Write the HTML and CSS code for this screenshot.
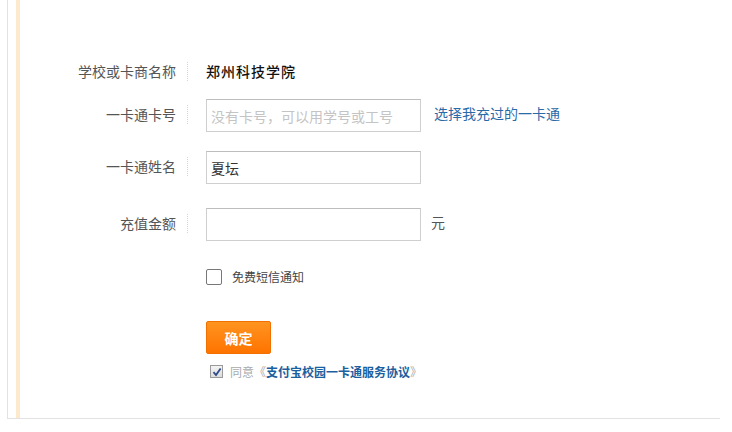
FILE: index.html
```html
<!DOCTYPE html>
<html lang="zh-CN">
<head>
    <meta charset="UTF-8">
    <meta name="viewport" content="width=device-width, initial-scale=1.0">
    <title>校园一卡通充值</title>
    <link rel="stylesheet" href="styles.css">
</head>
<body>
    <div class="panel">
        <div class="panel-body">
            <form class="recharge-form" id="rechargeForm">
                <div class="form-row row-school">
                    <label class="form-label">学校或卡商名称</label>
                    <div class="form-field">
                        <span class="school-name">郑州科技学院</span>
                    </div>
                </div>
                <div class="form-row row-card">
                    <label class="form-label" for="cardNo">一卡通卡号</label>
                    <div class="form-field">
                        <input class="text-input" type="text" id="cardNo" placeholder="没有卡号，可以用学号或工号">
                        <a class="side-link" href="#">选择我充过的一卡通</a>
                    </div>
                </div>
                <div class="form-row row-name">
                    <label class="form-label" for="cardName">一卡通姓名</label>
                    <div class="form-field">
                        <input class="text-input" type="text" id="cardName" value="夏坛">
                    </div>
                </div>
                <div class="form-row row-amount">
                    <label class="form-label" for="amount">充值金额</label>
                    <div class="form-field">
                        <input class="text-input" type="text" id="amount">
                        <span class="unit">元</span>
                    </div>
                </div>
                <div class="extra-row sms-row">
                    <label class="sms-option">
                        <span class="box"></span>
                        免费短信通知
                    </label>
                </div>
                <div class="extra-row submit-row">
                    <button type="submit" class="btn-submit">确定</button>
                </div>
                <div class="extra-row agree-row">
                    <span class="box-checked">
                        <svg width="10" height="10" viewBox="0 0 10 10">
                            <path d="M1.5 5.2 L4 8 L8.6 1.5" fill="none" stroke="#2d4a8c" stroke-width="1.8"/>
                        </svg>
                    </span>
                    <span class="agree-text">同意《<a href="#">支付宝校园一卡通服务协议</a>》</span>
                </div>
            </form>
        </div>
    </div>
</body>
</html>
```

FILE: styles.css
```css
body {
    margin: 0;
    background: #fff;
    font-family: "Noto Sans CJK SC", "Noto Sans", sans-serif;
    color: #555;
}
.panel {
    margin-left: 7px;
    width: 704px;
    height: 418px;
    border-left: 1px solid #e2e2e2;
    border-bottom: 1px solid #e2e2e2;
    padding-left: 8px;
}
.panel-body {
    height: 100%;
    border-left: 4px solid #fde9cc;
    padding-top: 56px;
    box-sizing: border-box;
}
.form-row {
    display: flex;
    align-items: center;
    height: 33px;
}
.row-card { margin-top: 10px; }
.row-name { margin-top: 19px; }
.row-amount { margin-top: 24px; }
.form-label {
    width: 156px;
    padding-right: 11px;
    text-align: right;
    font-size: 14px;
    color: #555;
    line-height: 20px;
    margin-top: -3px;
}
.form-field {
    display: flex;
    align-items: center;
    height: 33px;
    padding-left: 19px;
    position: relative;
}
.form-field::before {
    content: "";
    position: absolute;
    left: 0;
    top: 6px;
    height: 19px;
    border-left: 1px dotted #d6d6d6;
}
.school-name {
    font-size: 14px;
    font-weight: 500;
    color: #111;
    letter-spacing: 1px;
    margin-top: -3px;
}
.text-input {
    width: 215px;
    height: 33px;
    box-sizing: border-box;
    border: 1px solid #cfcfcf;
    border-top-color: #bdbdbd;
    padding: 0 4px;
    font-family: inherit;
    font-size: 14px;
    color: #333;
    outline: none;
}
.text-input::placeholder {
    color: #c4c4c4;
}
.side-link {
    margin-left: 13px;
    font-size: 14px;
    color: #2a6aa8;
    text-decoration: none;
    margin-top: -6px;
}
.unit {
    margin-left: 10px;
    font-size: 14px;
    color: #555;
    margin-top: -6px;
}
.extra-row {
    padding-left: 186px;
}
.sms-row {
    margin-top: 27px;
}
.sms-option {
    display: flex;
    align-items: center;
    font-size: 12px;
    color: #444;
}
.box {
    width: 14px;
    height: 14px;
    border: 1px solid #777;
    border-radius: 2px;
    margin-right: 10px;
}
.submit-row {
    margin-top: 36px;
}
.btn-submit {
    width: 65px;
    height: 33px;
    border: 1px solid #f07000;
    border-radius: 2px;
    background: linear-gradient(#ff9420, #ff7300);
    color: #fff;
    font-family: inherit;
    font-size: 14px;
    font-weight: bold;
    cursor: pointer;
}
.agree-row {
    display: flex;
    align-items: center;
    margin-top: 9px;
    padding-left: 190px;
}
.box-checked {
    display: flex;
    align-items: center;
    justify-content: center;
    width: 11px;
    height: 11px;
    border: 1px solid #9a9a9a;
    background: linear-gradient(#f4f4f4, #dcdcdc);
    margin-right: 7px;
}
.agree-text {
    font-size: 12px;
    color: #aaa;
}
.agree-text a {
    color: #1c5f9e;
    font-weight: bold;
    text-decoration: none;
}
```
